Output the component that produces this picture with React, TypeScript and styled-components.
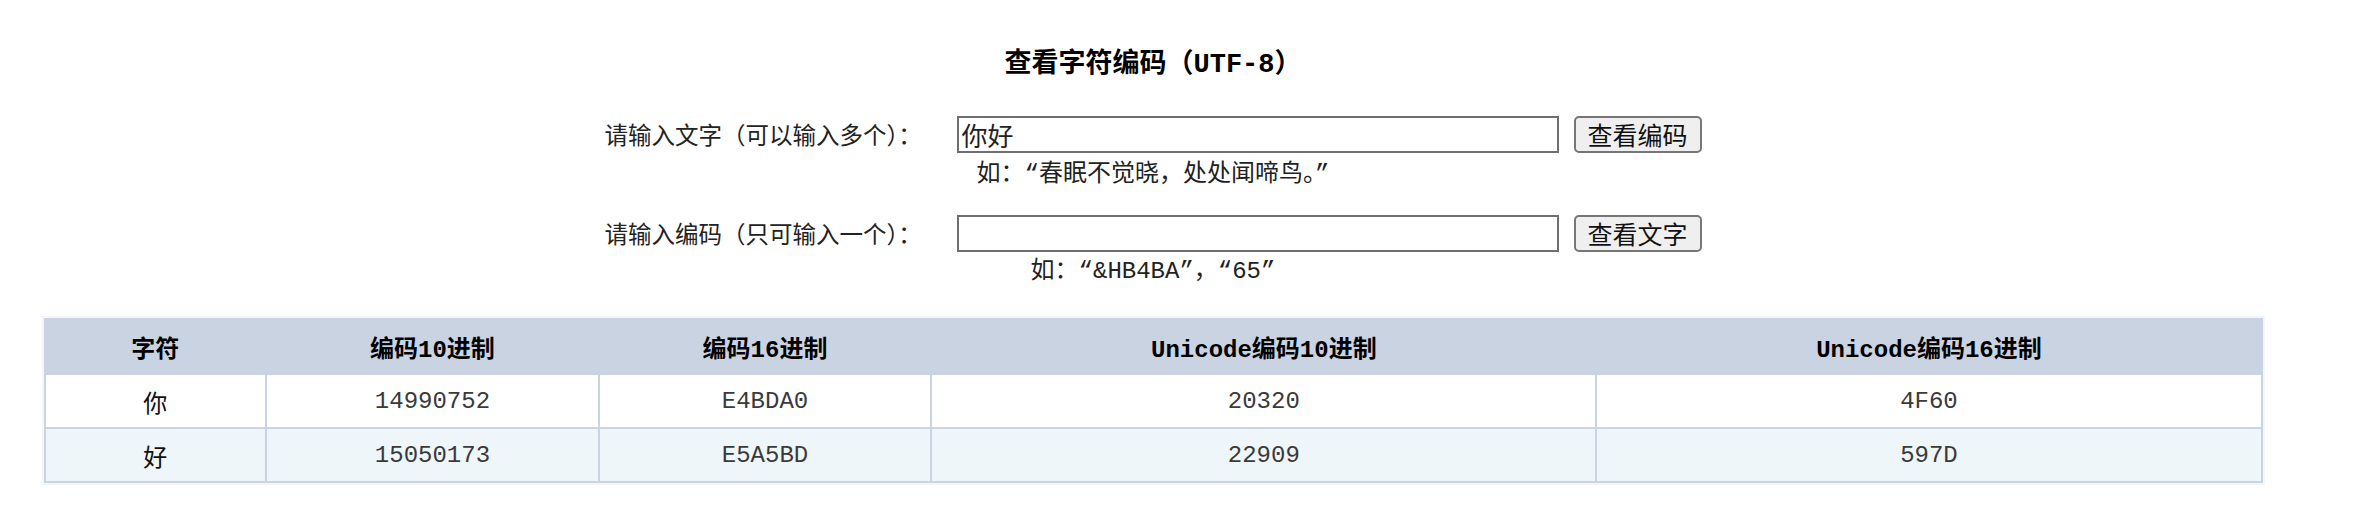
import React, { useState, ChangeEvent } from 'react';
import styled, { createGlobalStyle } from 'styled-components';

const GlobalStyle = createGlobalStyle`
  body {
    margin: 0;
    background: #ffffff;
    font-family: "Liberation Mono", "Noto Sans CJK SC", monospace;
    color: #111;
  }
`;

const Page = styled.div`
  width: 2306px;
  padding-top: 47px;
  display: flex;
  flex-direction: column;
  align-items: center;
`;

const Title = styled.h1`
  margin: 0;
  font-size: 27px;
  line-height: 36px;
  font-weight: 700;
  color: #000;
`;

const FormRow = styled.div<{ top: number }>`
  margin-top: ${props => props.top}px;
  display: flex;
  align-items: center;
  height: 38px;
`;

const Label = styled.label`
  width: 352px;
  font-family: "Noto Sans CJK SC", sans-serif;
  font-size: 23.5px;
  line-height: 28px;
  color: #222;
`;

const TextInput = styled.input`
  box-sizing: border-box;
  width: 602px;
  height: 37px;
  margin: 0;
  padding: 0 3px;
  border: 2px solid #6f6f6f;
  font-family: "Noto Sans CJK SC", sans-serif;
  font-size: 26px;
  color: #222;
  outline: none;
`;

const Button = styled.button`
  box-sizing: border-box;
  width: 128px;
  height: 37px;
  margin-left: 15px;
  padding: 0;
  border: 2px solid #767676;
  border-radius: 5px;
  background: #efefef;
  font-family: "Noto Sans CJK SC", sans-serif;
  font-size: 25px;
  line-height: 30px;
  color: #111;
  cursor: pointer;
`;

const Hint = styled.div<{ top: number }>`
  margin-top: ${props => props.top}px;
  font-size: 24px;
  line-height: 26px;
  color: #222;
`;

const TableFrame = styled.div`
  margin-top: 31px;
  width: 2223px;
  box-sizing: border-box;
  border: 2px solid #f3f5f9;
`;

const Table = styled.table`
  width: 100%;
  border-collapse: collapse;
  table-layout: fixed;
`;

const Th = styled.th`
  height: 53px;
  padding: 0;
  background: #cad3e2;
  border: 2px solid #cad3e2;
  font-size: 24px;
  font-weight: 700;
  color: #000;
`;

const Tr = styled.tr<{ striped?: boolean }>`
  background: ${props => (props.striped ? '#eff6fa' : '#ffffff')};
`;

const Td = styled.td`
  height: 52px;
  padding: 0;
  border: 2px solid #cad3e2;
  text-align: center;
  font-size: 24px;
  color: #3a3a3a;
`;

const CharCell = styled(Td)`
  font-family: "Noto Sans CJK SC", sans-serif;
  font-size: 24px;
  color: #111;
`;

interface Row {
  ch: string;
  dec: string;
  hex: string;
  uDec: string;
  uHex: string;
}

const encode = (text: string): Row[] =>
  Array.from(text).map(ch => {
    const bytes = Array.from(new TextEncoder().encode(ch));
    const hex = bytes.map(b => b.toString(16).toUpperCase().padStart(2, '0')).join('');
    const cp = ch.codePointAt(0) || 0;
    return {
      ch,
      dec: String(parseInt(hex, 16)),
      hex,
      uDec: String(cp),
      uHex: cp.toString(16).toUpperCase(),
    };
  });

const App: React.FC = () => {
  const [text, setText] = useState<string>('你好');
  const [code, setCode] = useState<string>('');
  const [rows, setRows] = useState<Row[]>(encode('你好'));

  const showText = (): void => {
    const v = code.trim().replace(/^&H/i, '');
    const n = /^&H/i.test(code.trim()) ? parseInt(v, 16) : parseInt(v, 10);
    if (!isNaN(n)) setRows(encode(String.fromCodePoint(n)));
  };

  return (
    <>
      <GlobalStyle />
      <Page>
        <Title>查看字符编码（UTF-8）</Title>

        <FormRow top={32}>
          <Label>请输入文字（可以输入多个）：</Label>
          <TextInput
            value={text}
            onChange={(e: ChangeEvent<HTMLInputElement>) => setText(e.target.value)}
          />
          <Button type="button" onClick={() => setRows(encode(text))}>查看编码</Button>
        </FormRow>
        <Hint top={9}>如：“春眠不觉晓，处处闻啼鸟。”</Hint>

        <FormRow top={26}>
          <Label>请输入编码（只可输入一个）：</Label>
          <TextInput
            value={code}
            onChange={(e: ChangeEvent<HTMLInputElement>) => setCode(e.target.value)}
          />
          <Button type="button" onClick={showText}>查看文字</Button>
        </FormRow>
        <Hint top={7}>如：“&amp;HB4BA”，“65”</Hint>

        <TableFrame>
          <Table>
            <colgroup>
              <col style={{ width: '10%' }} />
              <col style={{ width: '15%' }} />
              <col style={{ width: '15%' }} />
              <col style={{ width: '30%' }} />
              <col style={{ width: '30%' }} />
            </colgroup>
            <thead>
              <tr>
                <Th>字符</Th>
                <Th>编码10进制</Th>
                <Th>编码16进制</Th>
                <Th>Unicode编码10进制</Th>
                <Th>Unicode编码16进制</Th>
              </tr>
            </thead>
            <tbody>
              {rows.map((r, i) => (
                <Tr key={i} striped={i % 2 === 1}>
                  <CharCell>{r.ch}</CharCell>
                  <Td>{r.dec}</Td>
                  <Td>{r.hex}</Td>
                  <Td>{r.uDec}</Td>
                  <Td>{r.uHex}</Td>
                </Tr>
              ))}
            </tbody>
          </Table>
        </TableFrame>
      </Page>
    </>
  );
};

export default App;
